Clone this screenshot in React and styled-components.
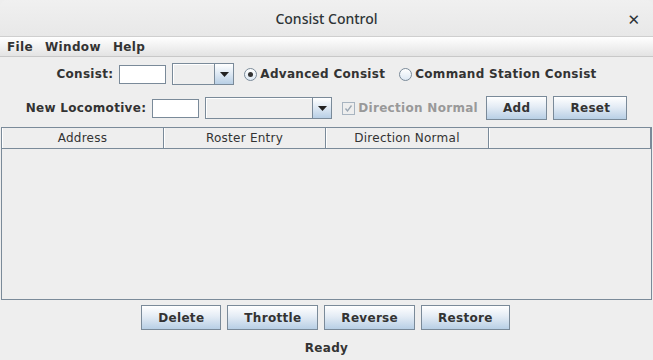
import React from 'react';
import styled, { createGlobalStyle } from 'styled-components';

const Global = createGlobalStyle`
  html, body {
    margin: 0;
    padding: 0;
    background: #eeeeee;
  }
  body {
    font-family: "DejaVu Sans", sans-serif;
  }
`;

const Frame = styled.div`
  width: 653px;
  height: 360px;
  display: flex;
  flex-direction: column;
  background: #eeeeee;
  overflow: hidden;
  border-radius: 7px 7px 0 0;
`;

const TitleBar = styled.div`
  height: 36px;
  flex: none;
  display: flex;
  align-items: center;
  justify-content: center;
  position: relative;
  background: linear-gradient(#f0f0f0, #e8e8e8);
  border-bottom: 1px solid #cfcfcf;
  font-family: "Noto Sans", "DejaVu Sans", sans-serif;
  font-size: 14px;
  font-weight: 500;
  color: #2e3436;
`;

const CloseButton = styled.span`
  position: absolute;
  right: 13px;
  top: 9px;
  font-size: 15px;
  font-weight: 700;
  color: #2e3436;
`;

const MenuBar = styled.div`
  height: 19px;
  flex: none;
  display: flex;
  align-items: center;
  padding-left: 1px;
  background: linear-gradient(#ffffff, #e3e3e3);
  border-bottom: 1px solid #c8c8c8;
`;

const MenuItem = styled.span`
  padding: 0 6px;
  font-size: 12px;
  font-weight: 700;
  letter-spacing: 0.35px;
  color: #333333;
`;

const Row = styled.div`
  display: flex;
  align-items: center;
  justify-content: center;
  gap: 6px;
  height: ${(p) => p.h}px;
  margin-top: ${(p) => p.top}px;
  flex: none;
  font-size: 12px;
  font-weight: 700;
  letter-spacing: 0.3px;
  color: #333333;
`;

const Option = styled.span`
  display: flex;
  align-items: center;
  gap: 3px;
  margin-left: ${(p) => p.gap}px;
`;

const Label = styled.span`
  color: ${(p) => (p.disabled ? '#999999' : '#333333')};
  white-space: nowrap;
`;

const TextField = styled.div`
  width: 45px;
  height: 17px;
  background: #ffffff;
  border: 1px solid #7a8a99;
`;

const Combo = styled.div`
  width: ${(p) => p.w}px;
  height: 22px;
  box-sizing: border-box;
  border: 1px solid #7a8a99;
  display: flex;
  background: #eeeeee;
`;

const ComboField = styled.div`
  flex: 1;
  border-right: 1px solid #7a8a99;
  box-shadow: inset 1px 1px 0 #ffffff;
`;

const ComboArrow = styled.div`
  width: 18px;
  display: flex;
  align-items: center;
  justify-content: center;
  background: linear-gradient(#ffffff, #dde8f3 50%, #b8cfe5);
`;

const Radio = styled.span`
  width: 11px;
  height: 11px;
  border-radius: 50%;
  border: 1px solid #7a8a99;
  background: linear-gradient(#ffffff, #dde8f3);
  display: flex;
  align-items: center;
  justify-content: center;
  flex: none;

  &::after {
    content: '';
    display: ${(p) => (p.on ? 'block' : 'none')};
    width: 5px;
    height: 5px;
    border-radius: 50%;
    background: #333333;
  }
`;

const CheckBox = styled.span`
  width: 11px;
  height: 11px;
  border: 1px solid #a8b4c0;
  background: #eeeeee;
  display: flex;
  align-items: center;
  justify-content: center;
  flex: none;
`;

const Button = styled.button`
  height: ${(p) => p.h || 24}px;
  padding: 0 16px;
  border: 1px solid #7a8a99;
  background: linear-gradient(#ffffff, #e4ecf5 45%, #b8cfe5);
  font-family: "DejaVu Sans", sans-serif;
  font-size: 12px;
  font-weight: 700;
  letter-spacing: 0.3px;
  color: #333333;
  margin-left: ${(p) => p.ml || 0}px;
  cursor: default;
`;

const TablePane = styled.div`
  margin-top: 7px;
  margin-left: 1px;
  margin-right: 1px;
  height: 172px;
  flex: none;
  border: 1px solid #7a8a99;
  border-top: none;
  display: flex;
  flex-direction: column;
`;

const Header = styled.div`
  display: grid;
  grid-template-columns: 162px 162px 163px 1fr;
  height: 20px;
  border-top: 1px solid #7a8a99;
  border-bottom: 1px solid #7a8a99;
  background: #eeeeee;
`;

const HeaderCell = styled.div`
  display: flex;
  align-items: center;
  justify-content: center;
  font-size: 12px;
  letter-spacing: 0.25px;
  color: #333333;
  border-right: 1px solid #7a8a99;
  box-shadow: inset 1px 0 0 #ffffff;
`;

const ButtonRow = styled.div`
  display: flex;
  justify-content: center;
  gap: 6px;
  margin-top: 5px;
  padding-right: 2px;
`;

const Status = styled.div`
  text-align: center;
  margin-top: 11px;
  font-size: 12px;
  font-weight: 700;
  letter-spacing: 0.3px;
  color: #333333;
`;

const Arrow = () => (
  <svg width="9" height="5" viewBox="0 0 9 5">
    <path d="M0 0H9L4.5 5Z" fill="#222" />
  </svg>
);

const Check = () => (
  <svg width="9" height="9" viewBox="0 0 9 9">
    <path d="M1.5 4.5L3.5 7L7.5 1.5" fill="none" stroke="#9aa6b2" strokeWidth="1.3" />
  </svg>
);

const columns = ['Address', 'Roster Entry', 'Direction Normal', ''];

export default function App() {
  return (
    <Frame>
      <Global />
      <TitleBar>
        Consist Control
        <CloseButton>✕</CloseButton>
      </TitleBar>
      <MenuBar>
        <MenuItem>File</MenuItem>
        <MenuItem>Window</MenuItem>
        <MenuItem>Help</MenuItem>
      </MenuBar>

      <Row h={22} top={6}>
        <Label>Consist:</Label>
        <TextField />
        <Combo w={62}>
          <ComboField />
          <ComboArrow><Arrow /></ComboArrow>
        </Combo>
        <Option gap={4}>
          <Radio on />
          <Label>Advanced Consist</Label>
        </Option>
        <Option gap={8}>
          <Radio />
          <Label>Command Station Consist</Label>
        </Option>
      </Row>

      <Row h={24} top={11}>
        <Label>New Locomotive:</Label>
        <TextField />
        <Combo w={127}>
          <ComboField />
          <ComboArrow><Arrow /></ComboArrow>
        </Combo>
        <Option gap={4}>
          <CheckBox><Check /></CheckBox>
          <Label disabled>Direction Normal</Label>
        </Option>
        <Button ml={2}>Add</Button>
        <Button>Reset</Button>
      </Row>

      <TablePane>
        <Header>
          {columns.map((c, i) => (
            <HeaderCell key={i}>{c}</HeaderCell>
          ))}
        </Header>
      </TablePane>

      <ButtonRow>
        <Button h={25}>Delete</Button>
        <Button h={25}>Throttle</Button>
        <Button h={25}>Reverse</Button>
        <Button h={25}>Restore</Button>
      </ButtonRow>

      <Status>Ready</Status>
    </Frame>
  );
}
